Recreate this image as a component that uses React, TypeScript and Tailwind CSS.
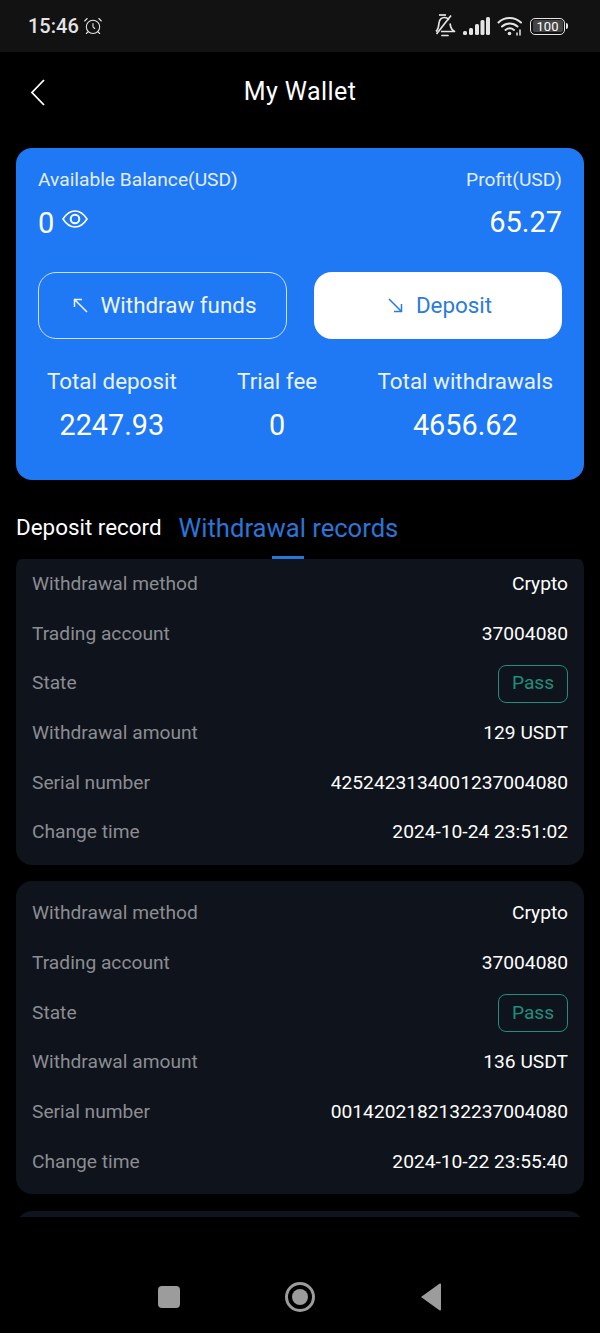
import { AlarmClock } from 'lucide-react'

interface WithdrawalRecord {
  method: string
  account: string
  amount: string
  serial: string
  time: string
}

const records: WithdrawalRecord[] = [
  { method: 'Crypto', account: '37004080', amount: '129 USDT', serial: '4252423134001237004080', time: '2024-10-24 23:51:02' },
  { method: 'Crypto', account: '37004080', amount: '136 USDT', serial: '0014202182132237004080', time: '2024-10-22 23:55:40' },
]

function Row({ label, children }: { label: string; children: React.ReactNode }) {
  return (
    <div className="flex h-[49.7px] items-center justify-between">
      <span className="text-[19.2px] text-[#8b8d92]">{label}</span>
      {children}
    </div>
  )
}

function Value({ text }: { text: string }) {
  return <span className="text-[19.2px] text-white">{text}</span>
}

function RecordCard({ record }: { record: WithdrawalRecord }) {
  return (
    <div className="rounded-2xl bg-[#0f131b] px-4 py-[7.4px]">
      <Row label="Withdrawal method"><Value text={record.method} /></Row>
      <Row label="Trading account"><Value text={record.account} /></Row>
      <Row label="State">
        <span className="flex h-[38px] w-[70px] items-center justify-center rounded-lg border border-[#1f8f7c] text-[19.2px] text-[#1f8f7c]">Pass</span>
      </Row>
      <Row label="Withdrawal amount"><Value text={record.amount} /></Row>
      <Row label="Serial number"><Value text={record.serial} /></Row>
      <Row label="Change time"><Value text={record.time} /></Row>
    </div>
  )
}

function Stat({ label, value }: { label: string; value: string }) {
  return (
    <div className="text-center">
      <div className="text-[22.4px] leading-[28px] text-[#eaf3ff]">{label}</div>
      <div className="mt-[12px] text-[28.8px] leading-[36px]">{value}</div>
    </div>
  )
}

function StatusBar() {
  return (
    <div className="flex h-[52px] items-center justify-between bg-[#121212] pl-7 pr-[32px] text-[#e4e4e4]">
      <div className="flex items-center gap-[4px]">
        <span className="text-[20px] font-medium">15:46</span>
        <AlarmClock className="h-[20px] w-[20px]" strokeWidth={1.3} />
      </div>
      <div className="flex items-center gap-[7px]">
        <svg width="22" height="24" viewBox="0 0 22 24" fill="none" stroke="currentColor" strokeWidth="1.7" strokeLinejoin="round">
          <path d="M2 17.500c2.500-2 2.500-5 3-8.500.5-3.500 3-5.500 5.500-5.500 2 0 3.500 1 4.300 2.500" />
          <path d="M16 9.500l.8 3.500c.4 1.800 1.800 3.300 3.700 4.500H7" />
          <path d="M8 21.500h6" strokeLinecap="round" />
          <path d="M2.500 20 17 1.500" />
          <path d="M5 1h7" />
        </svg>
        <svg width="27" height="20" viewBox="0 0 27 20" fill="currentColor">
          <rect x="0" y="15" width="4" height="4" rx="1.500" />
          <rect x="6" y="12" width="4" height="7" rx="1.500" />
          <rect x="12" y="8" width="4" height="11" rx="1.500" />
          <rect x="17.500" y="4" width="4" height="15" rx="1.500" />
          <rect x="23" y="1" width="4" height="18" rx="1.500" />
        </svg>
        <svg width="26" height="22" viewBox="0 0 26 22" fill="none" stroke="currentColor" strokeWidth="2" strokeLinecap="round">
          <path d="M1.500 7.500C7.500 1.500 17.500 1.500 24 7.500" />
          <path d="M5 11.500c4.500-4 11-4 15.500 0" />
          <path d="M8.500 15c2.500-2 6-2 8.500 0" />
          <circle cx="12.500" cy="18.500" r="1.800" fill="currentColor" stroke="none" />
          <path d="M20 20v-2M23 20v-5" strokeWidth="1.500" />
        </svg>
        <div className="flex items-center">
          <div className="flex h-[17px] w-[35px] items-center rounded-[5px] border-[1.5px] border-[#e4e4e4] p-[1.5px]">
            <span className="flex h-full w-full items-center justify-center rounded-[2px] bg-[#444] text-[13px] leading-none text-white">100</span>
          </div>
          <div className="ml-[1px] h-[6px] w-[2px] rounded-r bg-[#e4e4e4]" />
        </div>
      </div>
    </div>
  )
}

export default function App() {
  return (
    <div className="flex h-[1333px] w-[600px] flex-col overflow-hidden bg-black text-white [font-family:Roboto,sans-serif]">
      <StatusBar />

      <div className="relative flex h-[78px] items-center justify-center pt-[2px]">
        <svg className="absolute left-[29px] top-[26px]" width="17" height="29" viewBox="0 0 17 29" fill="none" stroke="currentColor" strokeWidth="1.8">
          <path d="M15 2 3 14.500 15 27" />
        </svg>
        <h1 className="text-[25px] tracking-[0.4px]">My Wallet</h1>
      </div>

      <div className="mx-4 mt-[18px] h-[332px] rounded-2xl bg-[#1f78f4] px-[22px] pt-[20px]">
        <div className="flex justify-between">
          <div>
            <div className="text-[19.2px] leading-[24px] text-[#e2eeff]">Available Balance(USD)</div>
            <div className="mt-[12px] flex h-[36px] items-center">
              <span className="mt-[4px] text-[29px]">0</span>
              <svg className="mb-[6px] ml-[8px]" width="26" height="18" viewBox="0 0 26 18" fill="none" stroke="currentColor" strokeWidth="1.6">
                <path d="M1 9C4.500 3.500 8.500 1 13 1s8.500 2.500 12 8c-3.500 5.500-7.500 8-12 8S4.500 14.500 1 9z" />
                <circle cx="13" cy="9" r="4.300" strokeWidth="2" />
              </svg>
            </div>
          </div>
          <div className="text-right">
            <div className="text-[19.2px] leading-[24px] text-[#e2eeff]">Profit(USD)</div>
            <div className="mt-[12px] text-[29px] leading-[36px]">65.27</div>
          </div>
        </div>

        <div className="mt-[32px] flex justify-between">
          <button className="flex h-[67px] w-[249px] items-center justify-center gap-[13px] rounded-[18px] border border-[#cfe2fd] pl-[4px] text-[22.4px] text-[#eef5ff]">
            <svg width="15" height="15" viewBox="0 0 15 15" fill="none" stroke="currentColor" strokeWidth="1.5">
              <path d="M14 14 1.500 1.500M1.500 9V1.500H9" />
            </svg>
            Withdraw funds
          </button>
          <button className="flex h-[67px] w-[248px] items-center justify-center gap-[13px] rounded-[18px] bg-white pl-[4px] text-[22.4px] text-[#2a7be0]">
            <svg width="15" height="15" viewBox="0 0 15 15" fill="none" stroke="currentColor" strokeWidth="1.5">
              <path d="M1 1 13.500 13.500M13.500 6v7.500H6" />
            </svg>
            Deposit
          </button>
        </div>

        <div className="mt-[28px] flex justify-between px-[9px]">
          <Stat label="Total deposit" value="2247.93" />
          <Stat label="Trial fee" value="0" />
          <Stat label="Total withdrawals" value="4656.62" />
        </div>
      </div>

      <div className="relative mx-4 flex h-[79px] items-center gap-[17px] pt-[17px]">
        <span className="text-[22.4px]">Deposit record</span>
        <span className="text-[25.6px] text-[#2a75d8]">Withdrawal records</span>
        <div className="absolute bottom-0 left-[256px] h-[3px] w-[32px] bg-[#2a75d8]" />
      </div>

      <div className="mx-4 h-[658px] overflow-hidden rounded-t-md">
        <div className="-mt-[7px] flex flex-col gap-[16.500px]">
          {records.map((r) => (
            <RecordCard key={r.serial} record={r} />
          ))}
          <div className="h-[40px] shrink-0 rounded-2xl bg-[#0f131b]" />
        </div>
      </div>

      <div className="flex flex-1 items-center justify-center pt-[44px]">
        <div className="flex w-[284px] items-center justify-between">
          <div className="h-[22px] w-[22px] rounded-[4px] bg-[#9c9c9c]" />
          <div className="flex h-[30px] w-[30px] items-center justify-center rounded-full border-[3px] border-[#9c9c9c]">
            <div className="h-[16px] w-[16px] rounded-full bg-[#9c9c9c]" />
          </div>
          <svg width="22" height="28" viewBox="0 0 22 28" fill="#9c9c9c">
            <path d="M21 1.500v25a1 1 0 0 1-1.600.8L1 14 19.400.7a1 1 0 0 1 1.600.8z" />
          </svg>
        </div>
      </div>
    </div>
  )
}
